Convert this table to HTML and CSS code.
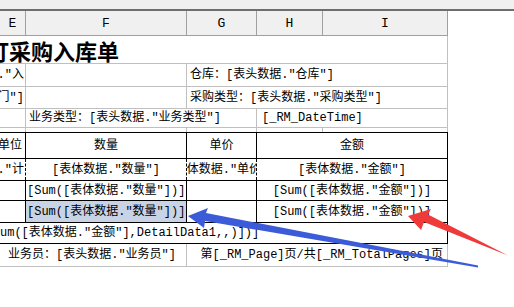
FILE: index.html
```html
<!DOCTYPE html>
<html lang="zh-CN">
<head>
<meta charset="utf-8">
<title>采购入库单</title>
<link rel="stylesheet" href="styles.css">
</head>
<body>
<div class="page">
  <div class="topbar"></div>
  <div class="sheet">
    <div class="row colhead">
      <div class="c">E</div><div class="c">F</div><div class="c">G</div><div class="c">H</div><div class="c">I</div>
    </div>
    <div class="row title">
      <div class="c s5 titletext">订采购入库单</div>
    </div>
    <div class="row r3">
      <div class="c end">[表头数据."入</div>
      <div class="c"></div>
      <div class="c s3 left">仓库：[表头数据."仓库"]</div>
    </div>
    <div class="row r4">
      <div class="c end">[表头数据."部门"]</div>
      <div class="c"></div>
      <div class="c s3 left">采购类型：[表头数据."采购类型"]</div>
    </div>
    <div class="row r5">
      <div class="c"></div>
      <div class="c s2 left">业务类型：[表头数据."业务类型"]</div>
      <div class="c s2 left dt">[_RM_DateTime]</div>
    </div>
    <div class="row r6">
      <div class="c"></div><div class="c"></div><div class="c"></div><div class="c"></div><div class="c"></div>
    </div>
    <div class="tbl">
      <div class="row trow th">
        <div class="c end pr">单位</div>
        <div class="c">数量</div>
        <div class="c">单价</div>
        <div class="c s2">金额</div>
      </div>
      <div class="row trow td">
        <div class="c end dash">[表体数据."计</div>
        <div class="c dash">[表体数据."数量"]</div>
        <div class="c dash">[表体数据."单价"]</div>
        <div class="c s2">[表体数据."金额"]</div>
      </div>
      <div class="row trow sum1">
        <div class="c"></div>
        <div class="c left tight">[Sum([表体数据."数量"])]</div>
        <div class="c"></div>
        <div class="c s2">[Sum([表体数据."金额"])]</div>
      </div>
      <div class="row trow sum2">
        <div class="c"></div>
        <div class="c left tight sel">[Sum([表体数据."数量"])]</div>
        <div class="c"></div>
        <div class="c s2">[Sum([表体数据."金额"])]</div>
      </div>
      <div class="row trow full">
        <div class="c s5 left nopad">um([表体数据."金额"],DetailData1,,)])]</div>
      </div>
    </div>
    <div class="row foot">
      <div class="c s2 ctr-off">业务员：[表头数据."业务员"]</div>
      <div class="c s3 endtxt">第[_RM_Page]页/共[_RM_TotalPages]页</div>
    </div>
  </div>
  <svg class="arrows" width="514" height="307" viewBox="0 0 514 307">
    <polygon fill="#3b5bd8" points="188,216 208,208 206,213 478,265.5 478,267.5 205,221 204,228"/>
    <polygon fill="#f03a3a" points="408,216 431,209 428,214.5 508,255.5 424,222 421,230"/>
  </svg>
</div>
</body>
</html>
```

FILE: styles.css
```css
html, body {
  margin: 0;
  padding: 0;
  background: #ffffff;
}
.page {
  position: relative;
  width: 514px;
  height: 307px;
  overflow: hidden;
  font-family: "Liberation Mono", "Noto Sans CJK SC", monospace;
  font-size: 12px;
  color: #000;
}
.topbar {
  height: 9px;
  background: #f0f0f0;
  border-bottom: 2px solid #6e6e6e;
}
.sheet {
  width: 448px;
  display: flex;
  flex-direction: column;
}
.row {
  display: grid;
  grid-template-columns: 26px 161px 70px 66px 125px;
  border-bottom: 1px solid #c0c0c0;
  box-sizing: border-box;
  overflow: hidden;
}
.c {
  box-sizing: border-box;
  border-right: 1px solid #c0c0c0;
  display: flex;
  align-items: center;
  justify-content: center;
  white-space: nowrap;
  overflow: hidden;
  line-height: 1;
}
.s2 { grid-column: span 2; }
.s3 { grid-column: span 3; }
.s5 { grid-column: span 5; }
.left { justify-content: flex-start; padding-left: 3px; }
.end { justify-content: flex-end; padding-right: 1px; }
.pr { padding-right: 3px; }
.dt { padding-left: 5px; }

.colhead {
  height: 25px;
  background: #f0f0f0;
  border-bottom: 1px solid #a0a0a0;
  font-family: "Liberation Mono", monospace;
  font-size: 13px;
}
.colhead .c { border-right-color: #a0a0a0; }

.title { height: 28px; }
.titletext {
  justify-content: flex-start;
  margin-left: -13px;
  font-size: 22px;
  font-weight: bold;
  font-family: "Noto Sans CJK SC", sans-serif;
  overflow: visible;
}
.r3 { height: 23px; }
.r4 { height: 22px; }
.r5 { height: 19px; }
.r6 { height: 5px; border-bottom: 1px solid #000; }

.tbl { display: flex; flex-direction: column; }
.trow { border-bottom: 1px solid #000; }
.trow .c { border-right-color: #000; }
.th { height: 26px; }
.td { height: 22px; }
.sum1 { height: 20px; }
.sum2 { height: 22px; }
.full { height: 21px; }
.tight { padding-left: 1px; }
.nopad { padding-left: 0; }
.trow .dash { border-right: 1px dashed #000; }
.sel { background: #c9d3e6; }

.foot { height: 23px; }
.ctr-off { padding-left: 8px; justify-content: flex-start; }
.endtxt { justify-content: flex-end; padding-right: 4px; }

.arrows {
  position: absolute;
  left: 0;
  top: 0;
  pointer-events: none;
}
```
